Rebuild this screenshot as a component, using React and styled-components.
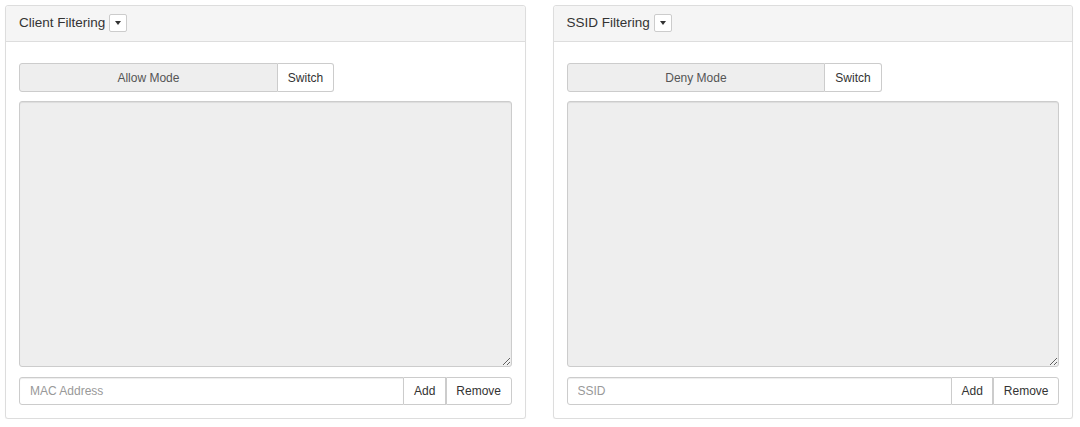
import React from 'react';
import styled, { createGlobalStyle } from 'styled-components';

const GlobalStyle = createGlobalStyle`
	body {
		margin: 0;
		background: #fff;
		font-family: 'Liberation Sans', Arial, sans-serif;
		color: #333;
	}
	* { box-sizing: border-box; }
`;

const Page = styled.div`
	display: flex;
	gap: 27px;
	padding: 5px 7px 0 5px;
`;

const Panel = styled.div`
	flex: 1;
	border: 1px solid #ddd;
	border-radius: 3px;
	background: #fff;
	box-shadow: 0 1px 1px rgba(0, 0, 0, 0.05);
`;

const Heading = styled.div`
	display: flex;
	align-items: center;
	gap: 4px;
	height: 36px;
	padding: 0 13px 2px;
	background: #f5f5f5;
	border-bottom: 1px solid #ddd;
	border-radius: 3px 3px 0 0;
	font-size: 13.5px;
`;

const Caret = styled.button`
	display: flex;
	align-items: center;
	justify-content: center;
	width: 18px;
	height: 18px;
	padding: 0;
	background: #fff;
	border: 1px solid #ccc;
	border-radius: 2px;
	&::after {
		content: '';
		border-top: 4px solid #333;
		border-left: 3.5px solid transparent;
		border-right: 3.5px solid transparent;
	}
`;

const Body = styled.div`
	display: flex;
	flex-direction: column;
	gap: 10px;
	padding: 21px 13px 13px;
`;

const ModeGroup = styled.div`
	display: flex;
	width: 64%;
	height: 29px;
	margin-bottom: -1px;
	font-size: 12px;
`;

const ModeLabel = styled.div`
	flex: 1;
	display: flex;
	align-items: center;
	justify-content: center;
	background: #eee;
	border: 1px solid #ccc;
	border-radius: 3px 0 0 3px;
	color: #555;
`;

const GroupButton = styled.button`
	height: 100%;
	padding: 0 ${(p) => p.pad || 10}px;
	background: #fff;
	border: 1px solid #ccc;
	border-left: ${(p) => (p.first ? 0 : '1px solid #ccc')};
	border-radius: ${(p) => (p.last ? '0 3px 3px 0' : 0)};
	font-family: inherit;
	font-size: 12px;
	color: #333;
`;

const ListBox = styled.textarea`
	display: block;
	width: 100%;
	height: 266px;
	resize: vertical;
	background: #eee;
	border: 1px solid #ccc;
	border-radius: 3px;
	box-shadow: inset 0 1px 1px rgba(0, 0, 0, 0.075);
	outline: none;
`;

const InputGroup = styled.div`
	display: flex;
	height: 28px;
	font-size: 12px;
`;

const TextInput = styled.input`
	flex: 1;
	min-width: 0;
	padding: 0 10px;
	border: 1px solid #ccc;
	border-radius: 3px 0 0 3px;
	font-family: inherit;
	font-size: 12px;
	color: #555;
	box-shadow: inset 0 1px 1px rgba(0, 0, 0, 0.075);
	&::placeholder { color: #999; }
`;

const FilterPanel = ({ title, mode, placeholder }) => (
	<Panel>
		<Heading>
			{title}
			<Caret />
		</Heading>
		<Body>
			<ModeGroup>
				<ModeLabel>{mode}</ModeLabel>
				<GroupButton first last>Switch</GroupButton>
			</ModeGroup>
			<ListBox readOnly />
			<InputGroup>
				<TextInput placeholder={placeholder} />
				<GroupButton first pad={9.5}>Add</GroupButton>
				<GroupButton last pad={9.5}>Remove</GroupButton>
			</InputGroup>
		</Body>
	</Panel>
);

const App = () => (
	<>
		<GlobalStyle />
		<Page>
			<FilterPanel title="Client Filtering" mode="Allow Mode" placeholder="MAC Address" />
			<FilterPanel title="SSID Filtering" mode="Deny Mode" placeholder="SSID" />
		</Page>
	</>
);

export default App;
